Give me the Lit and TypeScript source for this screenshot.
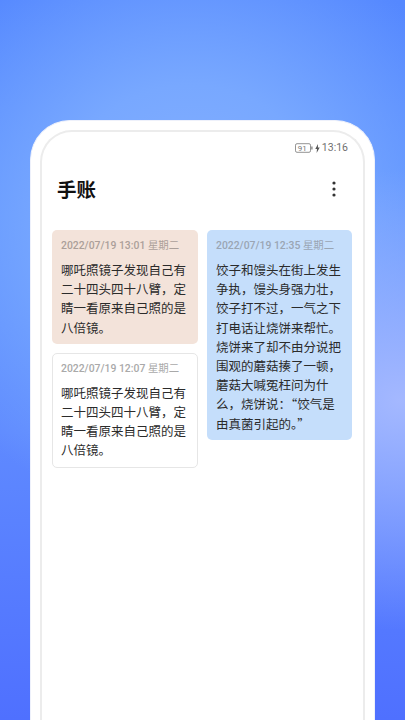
import { LitElement, html, css } from "lit";
import { customElement } from "lit/decorators.js";

const mirror = "哪吒照镜子发现自己有二十四头四十八臂，定睛一看原来自己照的是八倍镜。";

@customElement("app-root")
export class AppRoot extends LitElement {
  static styles = css`
    :host {
      display: block;
      width: 405px;
      height: 720px;
      overflow: hidden;
      box-sizing: border-box;
      padding: 120px 30px 0;
      background:
        radial-gradient(ellipse 270px 230px at 400px 400px, #a4b8ff 0%, rgba(164, 184, 255, 0) 100%),
        radial-gradient(ellipse 300px 300px at 190px 220px, #86b0ff 0%, #78a8ff 45%, rgba(110, 160, 255, 0) 100%),
        linear-gradient(180deg, #5588ff 0%, #5b90ff 30%, #5f8aff 60%, #4f70ff 100%);
      font-family: "Liberation Sans", "Noto Sans CJK SC", sans-serif;
    }
    .frame {
      height: 600px;
      box-sizing: border-box;
      padding: 9px 9px 0;
      background: #fff;
      border-radius: 40px 40px 0 0;
      border: 1px solid #eef1fb;
      border-bottom: 0;
    }
    .screen {
      height: 100%;
      box-sizing: border-box;
      padding: 0 10px;
      border: 2px solid #ececec;
      border-bottom: 0;
      border-radius: 32px 32px 0 0;
      background: #fff;
    }
    .status {
      height: 16px;
      margin-top: 8px;
      display: flex;
      align-items: center;
      justify-content: flex-end;
      gap: 2px;
      font: 10.5px/16px Roboto, "Liberation Sans", sans-serif;
      color: #6f6f6f;
      margin-right: 5px;
    }
    .status svg { display: block; }
    .header {
      display: flex;
      align-items: center;
      justify-content: space-between;
      margin-top: 18px;
      height: 30px;
      padding-left: 5px;
    }
    h1 {
      margin: 0;
      font: 700 19.5px/30px "Noto Sans CJK SC", sans-serif;
      color: #111;
    }
    .more {
      display: block;
      margin-right: 17px;
    }
    .cols {
      display: grid;
      grid-template-columns: 146px 145px;
      gap: 9px;
      margin-top: 26px;
      align-items: start;
    }
    .col { display: flex; flex-direction: column; gap: 9px; }
    .card {
      box-sizing: border-box;
      border-radius: 5px;
      padding: 9px 9px 7px;
    }
    .peach { background: #f3e3da; }
    .plain { background: #fff; border: 1px solid #e6e6e6; padding: 8px 8px 7px; }
    .blue { background: #c5defb; }
    .date {
      font: 500 10.4px/13px Roboto, "Noto Sans CJK SC", sans-serif;
      color: #a9a9a9;
      white-space: nowrap;
    }
    .peach .date { color: #ab9f99; }
    .blue .date { color: #9aa5b3; }
    .date .wk { font-weight: 400; }
    .text {
      margin: 8px 0 0;
      font: 400 12.5px/19.2px "Noto Sans CJK SC", sans-serif;
      color: #2b2b2b;
    }
  `;

  card(cls: string, date: string, week: string, text: string) {
    return html`<div class="card ${cls}">
      <div class="date">${date} <span class="wk">${week}</span></div>
      <p class="text">${text}</p>
    </div>`;
  }

  render() {
    return html`<div class="frame">
      <div class="screen">
        <div class="status">
          <svg width="18" height="10" viewBox="0 0 18 10" aria-hidden="true">
            <rect x="0.5" y="0.7" width="15" height="8.6" rx="1.5" fill="none" stroke="#777" stroke-width="0.8" />
            <rect x="16.3" y="3.5" width="1.2" height="3" fill="#777" />
            <text x="7.2" y="7.9" font-size="8" text-anchor="middle" fill="#777" font-family="Roboto">91</text>
          </svg>
          <svg width="5" height="9" viewBox="0 0 5 9" aria-hidden="true">
            <path d="M3 0 0.3 5h1.7L1.6 9 4.7 3.6H2.9z" fill="#555" />
          </svg>
          <span>13:16</span>
        </div>
        <div class="header">
          <h1>手账</h1>
          <svg class="more" width="4" height="16" viewBox="0 0 4 16" aria-hidden="true">
            <circle cx="2" cy="2" r="1.6" fill="#333" />
            <circle cx="2" cy="8" r="1.6" fill="#333" />
            <circle cx="2" cy="14" r="1.6" fill="#333" />
          </svg>
        </div>
        <div class="cols">
          <div class="col">
            ${this.card("peach", "2022/07/19 13:01", "星期二", mirror)}
            ${this.card("plain", "2022/07/19 12:07", "星期二", mirror)}
          </div>
          <div class="col">
            ${this.card(
              "blue",
              "2022/07/19 12:35",
              "星期二",
              "饺子和馒头在街上发生争执，馒头身强力壮，饺子打不过，一气之下打电话让烧饼来帮忙。烧饼来了却不由分说把围观的蘑菇揍了一顿，蘑菇大喊冤枉问为什么，烧饼说：“饺气是由真菌引起的。”"
            )}
          </div>
        </div>
      </div>
    </div>`;
  }
}
